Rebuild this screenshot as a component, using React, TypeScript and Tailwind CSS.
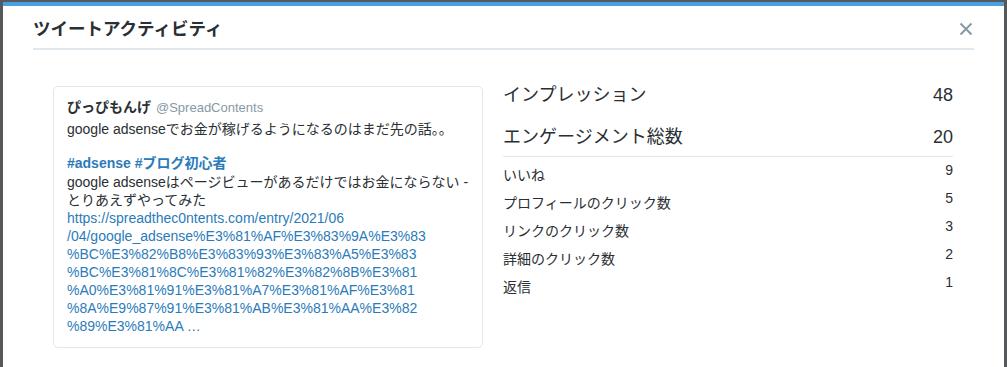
import React from 'react';

const urlLines = [
    'https://spreadthec0ntents.com/entry/2021/06',
    '/04/google_adsense%E3%81%AF%E3%83%9A%E3%83',
    '%BC%E3%82%B8%E3%83%93%E3%83%A5%E3%83',
    '%BC%E3%81%8C%E3%81%82%E3%82%8B%E3%81',
    '%A0%E3%81%91%E3%81%A7%E3%81%AF%E3%81',
    '%8A%E9%87%91%E3%81%AB%E3%81%AA%E3%82',
    '%89%E3%81%AA …',
];

const details = [
    { label: 'いいね', value: 9 },
    { label: 'プロフィールのクリック数', value: 5 },
    { label: 'リンクのクリック数', value: 3 },
    { label: '詳細のクリック数', value: 2 },
    { label: '返信', value: 1 },
];

const TweetCard: React.FC = () => (
    <div className="mt-[3px] w-[430px] shrink-0 self-start rounded-[5px] border border-[#e1e8ed] px-[13px] pt-[11px] pb-[12px] text-[14px] leading-[18px] text-[#292f33]">
        <div className="mb-[3px] whitespace-nowrap">
            <span className="font-bold">ぴっぴもんげ</span>
            <span className="ml-[5px] text-[13px] text-[#8899a6]">@SpreadContents</span>
        </div>
        <div className="whitespace-nowrap">google adsenseでお金が稼げるようになるのはまだ先の話。。</div>
        <div className="mt-[16px] whitespace-nowrap font-bold text-[#2b7bb9]">#adsense #ブログ初心者</div>
        <div className="mt-[1px] whitespace-nowrap">google adsenseはページビューがあるだけではお金にならない -</div>
        <div className="whitespace-nowrap">とりあえずやってみた</div>
        {urlLines.map(line => (
            <div key={line} className="whitespace-nowrap text-[#2b7bb9]">{line}</div>
        ))}
    </div>
);

const Stats: React.FC = () => (
    <div className="w-[450px] text-[#292f33]">
        <div className="flex items-center justify-between text-[18px] leading-[24px]">
            <span>インプレッション</span>
            <span>48</span>
        </div>
        <div className="mt-[18px] flex items-center justify-between text-[18px] leading-[24px]">
            <span>エンゲージメント総数</span>
            <span>20</span>
        </div>
        <div className="mt-[7px] h-px bg-[#e1e8ed]" />
        <div className="pt-[8px]">
            {details.map(d => (
                <div key={d.label} className="flex h-[28px] items-start justify-between text-[14px]">
                    <span className="leading-[20px]">{d.label}</span>
                    <span className="leading-[10px]">{d.value}</span>
                </div>
            ))}
        </div>
    </div>
);

export default function App() {
    return (
        <div className="h-[367px] w-[1007px] overflow-hidden bg-[#55595c] px-[3px] pt-[2px] font-['Liberation_Sans','Noto_Sans_CJK_JP',sans-serif]">
            <div className="h-full border-t-4 border-[#4aa1e2] bg-white">
                <div className="mx-[30px] flex items-center justify-between border-b-2 border-[#e1e8ed] pt-[11px] pb-[7px]">
                    <h1 className="text-[17.5px] font-bold leading-[24px] text-[#292f33]">ツイートアクティビティ</h1>
                    <button className="mr-[1px] text-[#8899a6]" aria-label="close">
                        <svg width="14" height="14" viewBox="0 0 14 14" fill="none" stroke="currentColor" strokeWidth="2">
                            <path d="M1.5 1.5 L12.5 12.5 M12.5 1.5 L1.5 12.5" />
                        </svg>
                    </button>
                </div>
                <div className="flex gap-[20px] px-[50px] pt-[33px]">
                    <TweetCard />
                    <Stats />
                </div>
            </div>
        </div>
    );
}
